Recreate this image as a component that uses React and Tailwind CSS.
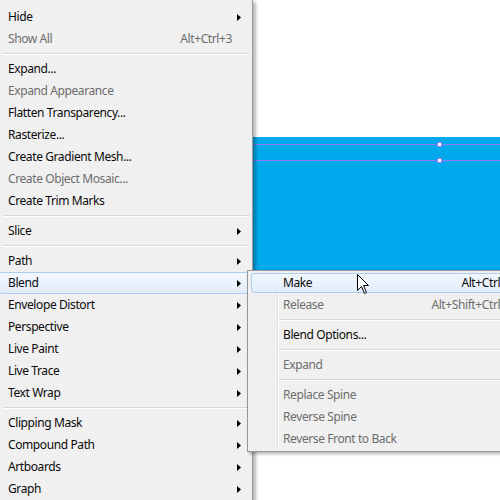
const font = { fontFamily: '"Noto Sans", "Open Sans", sans-serif' }

const objectMenu = [
  { label: 'Hide', sub: true },
  { label: 'Show All', disabled: true, key: 'Alt+Ctrl+3' },
  'sep',
  { label: 'Expand...' },
  { label: 'Expand Appearance', disabled: true },
  { label: 'Flatten Transparency...' },
  { label: 'Rasterize...' },
  { label: 'Create Gradient Mesh...' },
  { label: 'Create Object Mosaic...', disabled: true },
  { label: 'Create Trim Marks' },
  'sep',
  { label: 'Slice', sub: true },
  'sep',
  { label: 'Path', sub: true },
  { label: 'Blend', sub: true, active: true },
  { label: 'Envelope Distort', sub: true },
  { label: 'Perspective', sub: true },
  { label: 'Live Paint', sub: true },
  { label: 'Live Trace', sub: true },
  { label: 'Text Wrap', sub: true },
  'sep',
  { label: 'Clipping Mask', sub: true },
  { label: 'Compound Path', sub: true },
  { label: 'Artboards', sub: true },
  { label: 'Graph', sub: true },
]

const blendMenu = [
  { label: 'Make', key: 'Alt+Ctrl+B', active: true },
  { label: 'Release', key: 'Alt+Shift+Ctrl+B', disabled: true },
  'sep',
  { label: 'Blend Options...' },
  'sep',
  { label: 'Expand', disabled: true },
  'sep',
  { label: 'Replace Spine', disabled: true },
  { label: 'Reverse Spine', disabled: true },
  { label: 'Reverse Front to Back', disabled: true },
]

function Arrow() {
  return (
    <svg width="4" height="7" viewBox="0 0 4 7" className="shrink-0">
      <polygon points="0,0 4,3.5 0,7" fill="#000" />
    </svg>
  )
}

function MainMenu() {
  return (
    <div className="absolute left-0 top-0 bottom-0 w-[253px] bg-[#f0f0f0] border-r border-[#9a9a9a] pt-[6px] shadow-[3px_2px_3px_rgba(0,0,0,0.28)]">
      {objectMenu.map((item, i) =>
        item === 'sep' ? (
          <div key={i} className="h-[8px] flex items-center pl-[3px] pr-[2px]">
            <div className="w-full border-t border-[#d7d7d7] border-b border-b-white" />
          </div>
        ) : (
          <div key={i} className="relative h-[22px] flex items-center text-[12px] tracking-[-0.4px]">
            {item.active && (
              <div className="absolute inset-y-0 left-[-1px] right-[3px] rounded-[3px] border border-[#aecdf1] bg-gradient-to-b from-[#f2f7fe] to-[#e2edfb]" />
            )}
            <span className={`relative pl-[8px] ${item.disabled ? 'text-[#6d6d6d]' : 'text-[#0a0a0a]'}`}>{item.label}</span>
            <span className="flex-1" />
            {item.key && <span className="relative text-[#6d6d6d] pr-[20px]">{item.key}</span>}
            {item.sub && <span className="relative pr-[11px] flex"><Arrow /></span>}
          </div>
        )
      )}
    </div>
  )
}

function BlendMenu() {
  return (
    <div className="absolute left-[247px] top-[270px] w-[300px] bg-[#f0f0f0] border border-[#979797] py-[1px] shadow-[2px_2px_3px_rgba(0,0,0,0.3)]">
      {/* icon gutter */}
      <div className="absolute top-0 bottom-0 left-[29px] w-[2px] border-l border-[#e2e2e2] border-r border-r-white" />
      {blendMenu.map((item, i) =>
        item === 'sep' ? (
          <div key={i} className="h-[8px] flex items-center pl-[29px]">
            <div className="w-full border-t border-[#d7d7d7] border-b border-b-white" />
          </div>
        ) : (
          <div key={i} className="relative h-[22px] flex items-center text-[12px] tracking-[-0.4px] pl-[3px]">
            {item.active && (
              <div className="absolute top-[1px] bottom-[1px] left-[3px] right-[2px] rounded-[3px] border border-[#aecdf1] bg-gradient-to-b from-[#f2f7fe] to-[#e2edfb]" />
            )}
            <span className={`relative pl-[32px] ${item.disabled ? 'text-[#6d6d6d]' : 'text-[#0a0a0a]'}`}>{item.label}</span>
            <span className="flex-1" />
            {item.key && <span className={`relative pr-[32px] ${item.disabled ? 'text-[#6d6d6d]' : 'text-[#0a0a0a]'}`}>{item.key}</span>}
          </div>
        )
      )}
    </div>
  )
}

function Cursor() {
  return (
    <svg className="absolute left-[357px] top-[274px]" width="13" height="21" viewBox="0 0 13 21">
      <path d="M0.5 0.5 L0.5 16.5 L4.5 12.5 L7.5 19.5 L9.5 18.5 L6.5 11.5 L11.5 11.5 Z" fill="#fff" stroke="#000" strokeWidth="1" />
    </svg>
  )
}

export default function App() {
  return (
    <div className="relative w-[500px] h-[500px] overflow-hidden bg-white" style={font}>
      {/* artboard */}
      <div className="flex flex-col">
        <div className="h-[137px]" />
        <div className="relative h-[133px] bg-[#00a9ec]">
          <div className="absolute left-0 right-0 top-[7px] h-px bg-[#8c7cf6]" />
          <div className="absolute left-0 right-0 top-[23px] h-px bg-[#8c7cf6]" />
          <div className="absolute left-[437px] top-[5px] w-[5px] h-[5px] bg-white border border-[#8c7cf6]" />
          <div className="absolute left-[437px] top-[21px] w-[5px] h-[5px] bg-white border border-[#8c7cf6]" />
        </div>
      </div>
      <MainMenu />
      <BlendMenu />
      <Cursor />
    </div>
  )
}
